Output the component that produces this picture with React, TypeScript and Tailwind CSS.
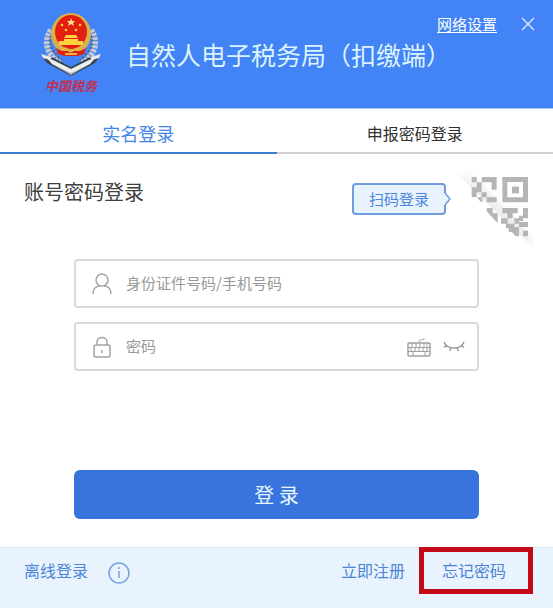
import { ReactNode } from "react";

type FieldProps = {
	id: string;
	type: string;
	label: string;
	icon: ReactNode;
	children?: ReactNode;
};

const EmblemLogo = () => (
	<svg viewBox="0 0 62 64" className="w-[62px] h-[64px]" aria-hidden="true">
		<g fill="none" stroke="#c3cad0" strokeWidth="6" strokeDasharray="3 1">
			<path d="M11 18C3 30 7 42 20 51" />
			<path d="M51 18C59 30 55 42 42 51" />
		</g>
		<g fill="none" stroke="#56626c" strokeWidth="2" strokeDasharray="2 2">
			<path d="M13 20C6 30 11 40 22 48" />
			<path d="M49 20C56 30 51 40 40 48" />
		</g>
		<path d="M1 43l11 2 19 10 19-10 11-2-6 8-24 13L7 51z" fill="#3d4650" />
		<path d="M1 42l11 3-2 3-7-2zM61 42l-11 3 2 3 7-2z" fill="#e6eaec" />
		<path d="M7 46l6 2 18 9 18-9 6-2-5 6-19 10L12 52z" fill="#eef1f2" />
		<path d="M14 53l17 8 17-8-17 10z" fill="#aab3ba" />
		<ellipse cx="31" cy="22" rx="20" ry="21" fill="#d9b04c" />
		<ellipse cx="31" cy="20" rx="16" ry="17" fill="#e3200f" />
		<path d="M31 6l1 3h3l-2 2 1 3-3-2-3 2 1-3-2-2h3z" fill="#ffe98a" />
		<g fill="#ffd23c">
			<circle cx="22" cy="13" r="1.3" />
			<circle cx="40" cy="13" r="1.3" />
			<circle cx="26" cy="18" r="1.3" />
			<circle cx="36" cy="18" r="1.3" />
			<path d="M26 23h10l2 3H24zM24 27h14v2H24zM19 29h24v4H19z" />
		</g>
		<path d="M16 36l6 3h18l6-3-2 6-7 2H25l-7-2z" fill="#e3200f" />
		<path d="M22 38q4-3 6 0t6 0q4-3 6 0M25 42h12" fill="none" stroke="#e6b544" strokeWidth="2" />
	</svg>
);

const UserIcon = () => (
	<svg viewBox="0 0 20 22" className="w-5 h-[22px]" fill="none" stroke="#a3a3a3" strokeWidth="1.5" aria-hidden="true">
		<circle cx="10" cy="7" r="6" />
		<path d="M1 21c0-5 3-8 7-8M19 21c0-5-3-8-7-8" />
	</svg>
);

const LockIcon = () => (
	<svg viewBox="0 0 20 22" className="w-5 h-[22px]" fill="none" stroke="#a3a3a3" strokeWidth="1.5" aria-hidden="true">
		<rect x="2" y="9" width="16" height="12" rx="2" />
		<path d="M5 9V6c0-6 10-6 10 0v3M10 14v3" />
	</svg>
);

const KeyboardIcon = () => (
	<svg viewBox="0 0 24 20" className="w-6 h-5" fill="none" stroke="#a0a0a0" aria-hidden="true">
		<rect x="1" y="6" width="22" height="13" rx="1" strokeWidth="1.5" />
		<path d="M12 6c0-4 1-3 3-3s2-1 2-2" />
		<path d="M1 10.5h22M1 14.5h22M5 6v4M9 6v4M13 6v4M17 6v4M20 6v4M4 10v4M8 10v4M12 10v4M16 10v4M20 10v4M6 14v5M18 14v5" />
	</svg>
);

const ClosedEyeIcon = () => (
	<svg viewBox="0 0 22 12" className="w-[22px] h-3" fill="none" stroke="#9a9a9a" strokeWidth="1.5" aria-hidden="true">
		<path d="M1 1c3 8 17 8 20 0M4 4L1 6.5M8 7L6.5 10M14 7l1.5 3M18 4l3 2.5" />
	</svg>
);

const QrCorner = () => (
	<svg viewBox="0 0 270 255" className="w-[90px] h-[85px]" aria-hidden="true">
		<defs>
			<linearGradient id="fold" gradientUnits="userSpaceOnUse" x1="115" y1="145" x2="160" y2="95">
				<stop offset="0" stopColor="#e2e2e2" />
				<stop offset="1" stopColor="#ffffff" />
			</linearGradient>
			<linearGradient id="fade" gradientUnits="userSpaceOnUse" x1="15" y1="20" x2="250" y2="250">
				<stop offset="0" stopColor="#ffffff" />
				<stop offset="0.2" stopColor="#ffffff" stopOpacity="0" />
				<stop offset="0.8" stopColor="#ffffff" stopOpacity="0" />
				<stop offset="1" stopColor="#ffffff" />
			</linearGradient>
		</defs>
		<path d="M15 20H65L250 215V250z" fill="url(#fold)" />
		<path d="M15 20H65L250 215V250z" fill="url(#fade)" />
		<g fill="#b5b5b5" transform="translate(48 21)">
			<path d="M17 15h15v16H17zM47 15h45v16H47zM32 31h15v15H32zM77 31h15v22H77zM17 46h30v15H17zM17 61h15v14H17zM47 61h15v15H47zM32 76h17v14H45zM62 76h30v15H62z" />
			<path d="M109 15h77v76h-77zM124 30v46h47V30z" fillRule="evenodd" />
			<path d="M138 44h21v20h-21z" />
			<path d="M62 108h18v16h15v30L62 118z" />
			<path d="M109 108h46v16h-46zM171 108h15v31h-15zM124 124h16v15h-16zM105 139h20v16h-20zM145 139h14v16h-14zM159 131h12v16h-12zM120 155h25v14h-25zM159 150h27v15h-27zM128 165h31v15h-31zM138 180h21v13h-11zM171 176h15v17h-15z" />
		</g>
	</svg>
);

const Field = ({ id, type, label, icon, children }: FieldProps) => (
	<div className="flex items-center h-[49px] px-4 border-2 border-[#dadada] rounded">
		<label htmlFor={id} aria-label={label} className="w-[34px] shrink-0">
			{icon}
		</label>
		<input
			id={id}
			type={type}
			placeholder={label}
			className="flex-1 min-w-0 h-full pb-[2px] bg-transparent text-[15px] text-[#333] placeholder:text-[#989898] outline-none"
		/>
		{children}
	</div>
);

const App = () => {
	return (
		<div className="flex flex-col min-h-screen bg-white font-['Noto_Sans_CJK_SC',sans-serif]">
			<header className="relative flex items-start h-[109px] pl-10 bg-[#4284f5] border-b border-[#a9cbfa] text-white">
				<div className="flex flex-col items-center pt-3">
					<EmblemLogo />
					<span className="text-[13px] leading-5 italic font-bold text-[#c42f50]">中国税务</span>
				</div>
				<h1 className="ml-6 mt-[38px] text-[25px] leading-8 font-normal whitespace-nowrap text-[#dcf3ff]">
					自然人电子税务局（扣缴端）
				</h1>
				<div className="absolute top-0 right-[18px] flex items-center gap-6 h-12">
					<a href="#network" className="text-[15px] leading-5 underline underline-offset-2">
						网络设置
					</a>
					<button type="button" aria-label="关闭" className="cursor-pointer">
						<svg viewBox="0 0 14 14" className="w-[14px] h-[14px]" stroke="#e2ecff" strokeWidth="1.3">
							<path d="M1 1l12 12M13 1L1 13" />
						</svg>
					</button>
				</div>
			</header>

			<nav className="flex h-[45px]">
				<button type="button" className="flex-1 pt-1 border-b-2 border-[#3f7cd0] text-lg leading-6 text-[#4284e8] cursor-pointer">
					实名登录
				</button>
				<button type="button" className="flex-1 pt-1 border-b-2 border-[#d3cfcf] text-base leading-6 text-[#303030] cursor-pointer">
					申报密码登录
				</button>
			</nav>

			<main className="flex-1">
				<div className="flex justify-between h-[105px] pl-6 pr-[13px]">
					<h2 className="mt-6 text-xl leading-7 text-[#404040]">账号密码登录</h2>
					<div className="flex items-start pt-[11px]">
						<button
							type="button"
							className="relative w-[94px] h-8 mt-[18px] mr-1 border-2 border-[#6f9de0] rounded bg-[#e9f3fe] text-[15px] leading-5 text-[#4a84dc] cursor-pointer"
						>
							扫码登录
							<svg viewBox="0 0 7 12" className="absolute -right-[7px] top-2 w-[7px] h-3" aria-hidden="true">
								<path d="M0 0h1l5 6-5 6H0z" fill="#e9f3fe" />
								<path d="M1 0l5 6-5 6" fill="none" stroke="#6f9de0" strokeWidth="1.5" />
							</svg>
						</button>
						<QrCorner />
					</div>
				</div>

				<form className="flex flex-col px-[74px]">
					<div className="flex flex-col gap-[14px]">
						<Field id="account" type="text" label="身份证件号码/手机号码" icon={<UserIcon />} />
						<Field id="password" type="password" label="密码" icon={<LockIcon />}>
							<button type="button" aria-label="软键盘" className="cursor-pointer">
								<KeyboardIcon />
							</button>
							<button type="button" aria-label="显示密码" className="ml-3 -mr-3 pr-2 cursor-pointer">
								<ClosedEyeIcon />
							</button>
						</Field>
					</div>
					<button type="submit" className="h-[49px] mt-[99px] mb-7 rounded-md bg-[#3874dc] text-xl leading-7 text-[#e9f6ff] cursor-pointer">
						登 录
					</button>
				</form>
			</main>

			<footer className="flex items-start h-[62px] pl-6 pr-5 border-t border-[#d9e6f2] bg-[#e8f3fe] text-base leading-6 text-[#4d84d6]">
				<a href="#offline" className="mt-[10px]">
					离线登录
				</a>
				<button type="button" aria-label="离线登录说明" className="mt-[14px] ml-5 cursor-pointer">
					<svg viewBox="0 0 22 22" className="w-[22px] h-[22px]" fill="none" stroke="#78a2e0" strokeWidth="1.5">
						<circle cx="11" cy="11" r="10" />
						<path d="M11 9v7M11 5v2" />
					</svg>
				</button>
				<a href="#register" className="mt-[10px] ml-auto">
					立即注册
				</a>
				<a
					href="#forgot"
					className="flex items-center justify-center w-[114px] h-[47px] ml-[14px] -mt-px pr-1 pb-[2px] border-5 border-[#c40a18]"
				>
					忘记密码
				</a>
			</footer>
		</div>
	);
};

export default App;
